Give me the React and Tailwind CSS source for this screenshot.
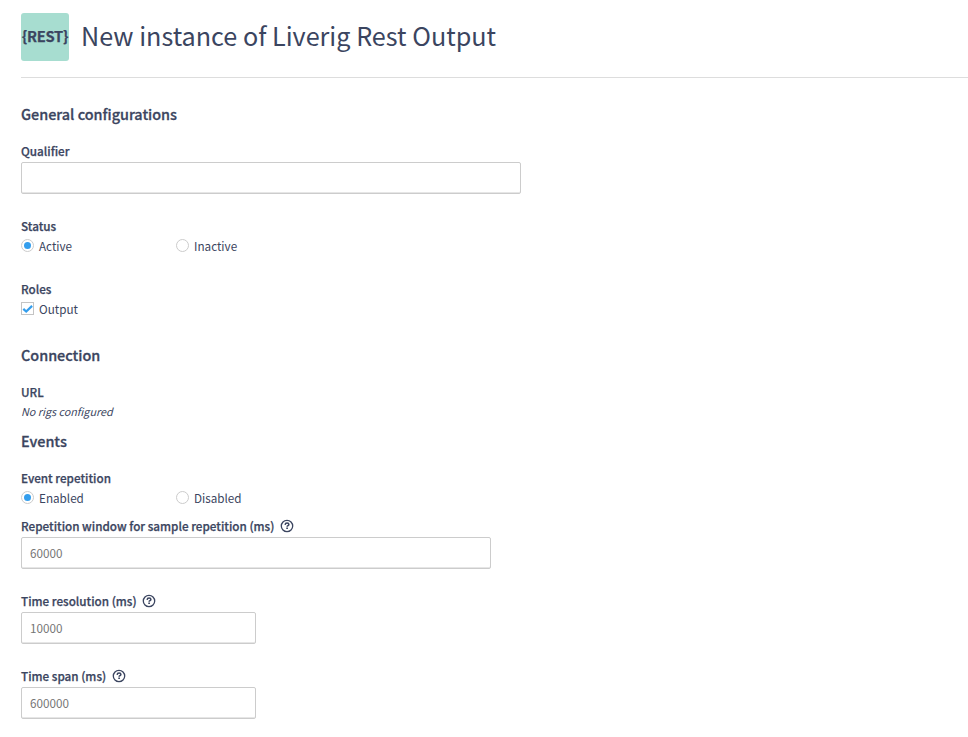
import React from "react";

function SectionTitle({ children }) {
  return (
    <h2 className="mb-[15px] h-6 text-[14.4px] leading-[22px] font-medium whitespace-nowrap [-webkit-text-stroke:0.3px_#3b4560]">
      {children}
    </h2>
  );
}

function HelpIcon() {
  return (
    <svg viewBox="0 0 14 14" className="ml-[5.5px] size-[14px] shrink-0" fill="none" stroke="#3b4560">
      <circle cx="7" cy="7" r="5.7" strokeWidth="1.3" />
      <path d="M5.1 5.9C5.2 4.7 6 4.1 7.1 4.1c1.1 0 1.8.5 1.8 1.3 0 1.2-1.8 1.2-1.8 2.4" strokeWidth="1.5" />
      <path d="M7.1 8.6v1.5" strokeWidth="1.7" />
    </svg>
  );
}

function Label({ children, help }) {
  return (
    <div className="flex h-5 items-center pb-[2px] text-[11.7px] leading-[18px] font-medium whitespace-nowrap [-webkit-text-stroke:0.25px_#3b4560]">
      <span>{children}</span>
      {help && <HelpIcon />}
    </div>
  );
}

function TextInput({ width, placeholder }) {
  return (
    <input
      type="text"
      placeholder={placeholder}
      className={`block h-8 rounded-[2px] border border-[#cccccc] bg-white px-2 pb-[2px] text-[11.7px] shadow-[inset_0_-1px_0_#e6e6e6] outline-none placeholder:text-[#757575] ${width}`}
    />
  );
}

function Radio({ name, label, checked }) {
  return (
    <label className="flex h-5 w-[155px] items-center pb-[2px] text-[11.7px] leading-[18px]">
      <span className="mr-[5px] mb-[2px] flex size-[13px] items-center justify-center rounded-full border border-[#cccccc]">
        <input
          type="radio"
          name={name}
          defaultChecked={checked}
          className="size-[7px] appearance-none rounded-full checked:bg-[#349eed]"
        />
      </span>
      {label}
    </label>
  );
}

function Checkbox({ label }) {
  return (
    <label className="flex h-5 items-center pb-[2px] text-[11.7px] leading-[18px]">
      <span className="mr-[5px] mb-[2px] flex size-[13px] items-center justify-center border border-[#c4c4c4]">
        <svg viewBox="0 0 11 11" className="size-[11px]" fill="none" stroke="#349eed" strokeWidth="2.2">
          <path d="M1.3 5.9L4.2 8.6L10.1 2.9" />
        </svg>
      </span>
      {label}
    </label>
  );
}

export default function App() {
  return (
    <div className="h-[737px] overflow-hidden bg-white pt-[13px] pl-[21px] font-['Noto_Sans_CJK_JP','Noto_Sans_CJK_SC',sans-serif] text-[11.7px] text-[#3b4560]">
      <header className="flex h-[65px] items-start border-b border-[#dddddd]">
        <div className="flex size-12 shrink-0 items-center justify-center rounded-[3px] bg-[#a7ddd0] pb-[2px] text-[14.7px] leading-none font-bold tracking-[-0.3px] [-webkit-text-stroke:0.25px_#3b4560]">
          {"{REST}"}
        </div>
        <h1 className="ml-3 h-12 text-[25.2px] leading-[44px] whitespace-nowrap">
          New instance of Liverig Rest Output
        </h1>
      </header>

      <section className="pt-[25px]">
        <SectionTitle>General configurations</SectionTitle>
        <Label>Qualifier</Label>
        <TextInput width="w-[500px]" />
        <div className="mt-[23px]">
          <Label>Status</Label>
          <div className="flex">
            <Radio name="status" label="Active" checked />
            <Radio name="status" label="Inactive" />
          </div>
        </div>
        <div className="mt-[23px]">
          <Label>Roles</Label>
          <Checkbox label="Output" />
        </div>
      </section>

      <section className="pt-6">
        <SectionTitle>Connection</SectionTitle>
        <Label>URL</Label>
        <p className="h-[18px] text-[10.8px] leading-[16px] italic">No rigs configured</p>
      </section>

      <section className="pt-[9px]">
        <SectionTitle>Events</SectionTitle>
        <Label>Event repetition</Label>
        <div className="flex">
          <Radio name="repetition" label="Enabled" checked />
          <Radio name="repetition" label="Disabled" />
        </div>
        <div className="mt-2">
          <Label help>Repetition window for sample repetition (ms)</Label>
          <TextInput width="w-[470px]" placeholder="60000" />
        </div>
        <div className="mt-[23px]">
          <Label help>Time resolution (ms)</Label>
          <TextInput width="w-[235px]" placeholder="10000" />
        </div>
        <div className="mt-[23px]">
          <Label help>Time span (ms)</Label>
          <TextInput width="w-[235px]" placeholder="600000" />
        </div>
      </section>
    </div>
  );
}
